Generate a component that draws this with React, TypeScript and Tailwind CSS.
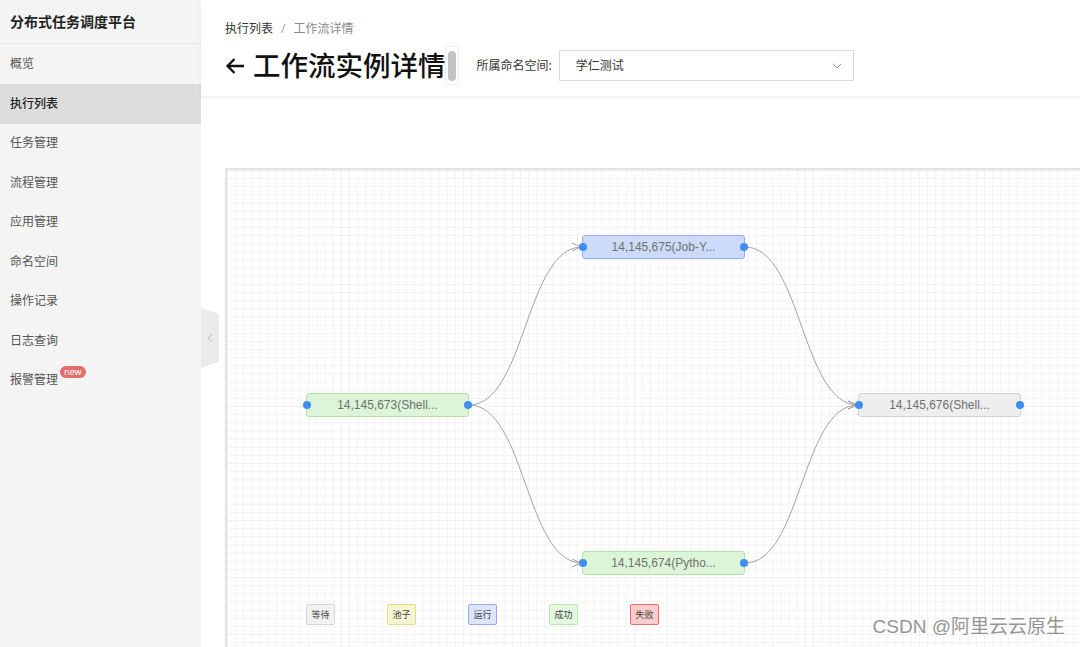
import { ChevronDown, ChevronLeft } from "lucide-react"

const menu = ["概览", "执行列表", "任务管理", "流程管理", "应用管理", "命名空间", "操作记录", "日志查询", "报警管理"]

const nodes = [
  { id: "a", label: "14,145,673(Shell...", x: 79, y: 223, cls: "bg-[#dcf5d8] border-[#b3e3a6]" },
  { id: "b", label: "14,145,675(Job-Y...", x: 355, y: 65, cls: "bg-[#cddbfa] border-[#8fabee]" },
  { id: "c", label: "14,145,674(Pytho...", x: 355, y: 381, cls: "bg-[#dcf5d8] border-[#b3e3a6]" },
  { id: "d", label: "14,145,676(Shell...", x: 631, y: 223, cls: "bg-[#eeeeee] border-[#d2d2d2]" },
]

const legend = [
  { label: "等待", cls: "bg-[#f2f2f2] border-[#d6d6d6]" },
  { label: "池子", cls: "bg-[#f6f5d2] border-[#e2dc86]" },
  { label: "运行", cls: "bg-[#dce5fa] border-[#94acec]" },
  { label: "成功", cls: "bg-[#e4f8df] border-[#bfe8b2]" },
  { label: "失败", cls: "bg-[#f7cdcb] border-[#e8706a]" },
]

const NODE_W = 163
const NODE_H = 24

function edge(x1: number, y1: number, x2: number, y2: number) {
  const mx = (x1 + x2) / 2
  return `M${x1},${y1} C${mx},${y1} ${mx},${y2} ${x2},${y2}`
}

export default function App() {
  const port = (n: (typeof nodes)[number], side: "l" | "r") => ({
    x: side === "l" ? n.x : n.x + NODE_W,
    y: n.y + NODE_H / 2,
  })
  const [a, b, c, d] = nodes
  const links = [
    [port(a, "r"), port(b, "l")],
    [port(a, "r"), port(c, "l")],
    [port(b, "r"), port(d, "l")],
    [port(c, "r"), port(d, "l")],
  ]

  return (
    <div className="relative flex h-[647px] w-[1080px] overflow-hidden bg-white font-['Noto_Sans','Noto_Sans_CJK_SC',sans-serif] text-[#333]">
      {/* Sidebar */}
      <aside className="flex w-[201px] shrink-0 flex-col bg-[#f4f4f4]">
        <div className="flex h-[44px] items-center border-b border-[#e8e8e8] px-[10px] text-[14px] font-semibold text-[#222]">
          分布式任务调度平台
        </div>
        <nav className="flex flex-col pt-[0.5px]">
          {menu.map((item) => (
            <div
              key={item}
              className={`flex h-[39.5px] items-center px-[10px] text-[12px] ${
                item === "执行列表" ? "bg-[#dddddd] font-medium text-[#222]" : "text-[#555]"
              }`}
            >
              <span className="relative">
                {item}
                {item === "报警管理" && (
                  <span className="absolute -top-[5px] left-[50px] rounded-full bg-[#e26d6a] px-[4px] text-[9px] leading-[12px] text-white">
                    new
                  </span>
                )}
              </span>
            </div>
          ))}
        </nav>
      </aside>

      {/* collapse tab */}
      <div className="absolute left-[201px] top-[308px] flex h-[60px] w-[18px] items-center justify-center bg-[#ebebeb] [clip-path:polygon(0_0,100%_9%,100%_90%,0_100%)]">
        <ChevronLeft className="h-[14px] w-[14px] text-[#aaa]" strokeWidth={1.5} />
      </div>

      {/* Main */}
      <main className="flex min-w-0 flex-1 flex-col">
        <header className="flex h-[97px] shrink-0 flex-col border-b border-[#f2f2f2] px-6 pt-[20px] shadow-[0_2px_4px_rgba(0,0,0,0.04)]">
          <div className="flex items-center gap-[8px] text-[12px]">
            <span className="text-[#333]">执行列表</span>
            <span className="text-[#aaa]">/</span>
            <span className="text-[#888]">工作流详情</span>
          </div>
          <div className="mt-[8px] flex items-center">
            <svg width="20" height="18" viewBox="0 0 20 18" className="shrink-0">
              <path d="M19 9H2.5M9.5 2L2.5 9L9.5 16" fill="none" stroke="#111" strokeWidth="2.3" />
            </svg>
            <span className="ml-[8px] text-[27.5px] font-medium leading-none text-[#111]">工作流实例详情</span>
            <div className="ml-[-1px] flex h-[39px] w-[14px] items-center justify-center border border-[#f0f0f0]">
              <div className="h-[30px] w-[8px] rounded-full bg-[#c3c3c3]" />
            </div>
            <span className="ml-[18px] text-[12px] text-[#333]">所属命名空间:</span>
            <div className="ml-[7px] flex h-[31px] w-[295px] items-center justify-between border border-[#dcdcdc] pl-[16px] pr-[8px] text-[12px] text-[#333]">
              学仁测试
              <ChevronDown className="h-[16px] w-[16px] text-[#888]" strokeWidth={1.3} />
            </div>
          </div>
        </header>

        {/* Canvas */}
        <div className="ml-6 mt-[71px] flex-1">
          <div className="relative h-[600px] w-[900px] border-l-2 border-t-2 border-[#e3e3e3] bg-white bg-[linear-gradient(to_right,#f1f1f1_1px,transparent_1px),linear-gradient(to_bottom,#f1f1f1_1px,transparent_1px)] bg-[size:8.15px_8.15px]">
            <svg className="absolute inset-0" width="900" height="600">
              {links.map(([p, q], i) => (
                <g key={i} fill="none" stroke="#a3a3a3" strokeWidth="1">
                  <path d={edge(p.x, p.y, q.x, q.y)} />
                  <path d={`M${q.x - 10},${q.y - 4} L${q.x - 1},${q.y} L${q.x - 10},${q.y + 4}`} />
                </g>
              ))}
            </svg>
            {nodes.map((n) => (
              <div
                key={n.id}
                className={`absolute flex h-[24px] w-[163px] items-center justify-center rounded-[3px] border font-['Liberation_Sans','Noto_Sans_CJK_SC',sans-serif] text-[12px] text-[#707070] ${n.cls}`}
                style={{ left: n.x, top: n.y }}
              >
                {n.label}
                <span className="absolute -left-[4px] top-[7px] h-[8px] w-[8px] rounded-full bg-[#3d8ef0]" />
                <span className="absolute -right-[4px] top-[7px] h-[8px] w-[8px] rounded-full bg-[#3d8ef0]" />
              </div>
            ))}
            <div className="absolute left-[79px] top-[434px] flex gap-[52px]">
              {legend.map((l) => (
                <div
                  key={l.label}
                  className={`flex h-[21px] w-[29px] items-center justify-center rounded-[2px] border text-[9px] text-[#444] ${l.cls}`}
                >
                  {l.label}
                </div>
              ))}
            </div>
          </div>
        </div>
      </main>

      {/* watermark */}
      <div className="absolute bottom-[6px] right-[15px] font-['Liberation_Sans','Noto_Sans_CJK_SC',sans-serif] text-[19px] text-[#959595] [text-shadow:0_0_2px_#fff]">
        CSDN @阿里云云原生
      </div>
    </div>
  )
}
